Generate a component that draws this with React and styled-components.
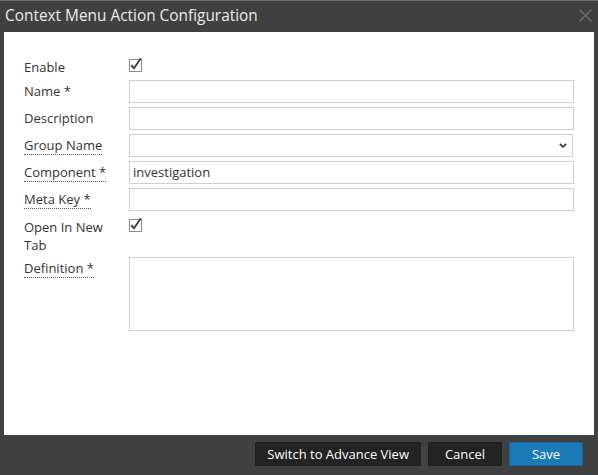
import React from "react";
import styled, { createGlobalStyle } from "styled-components";

const Global = createGlobalStyle`
  html, body { margin: 0; padding: 0; background: #404040; }
  body { font-family: "Open Sans", "Liberation Sans", sans-serif; }
  * { box-sizing: border-box; }
`;

const Dialog = styled.div`
  width: 598px;
  height: 475px;
  background: #404040;
  border-top: 1px solid #6e6e6e;
  display: flex;
  flex-direction: column;
`;

const TitleBar = styled.div`
  height: 31px;
  display: flex;
  align-items: flex-start;
  justify-content: space-between;
  padding: 4px 6px 0 5px;
`;

const Title = styled.div`
  font-size: 15.4px;
  line-height: 22px;
  color: #ececec;
`;

const Close = styled.button`
  border: 0;
  background: transparent;
  padding: 0;
  margin-top: 4px;
  width: 13px;
  height: 13px;
  display: block;
  cursor: pointer;
`;

const Body = styled.div`
  margin: 0 4px;
  height: 403px;
  background: #fff;
  padding: 23px 20px 0 20px;
  display: flex;
  flex-direction: column;
  gap: 4px;
`;

const Row = styled.div`
  display: grid;
  grid-template-columns: 95px 1fr;
  column-gap: 10px;
  align-items: start;
  padding-top: ${(p) => (p.$check ? "3px" : "0")};
  margin-top: ${(p) => (p.$pull ? "-1px" : "0")};
`;

const Label = styled.div`
  font-size: 13px;
  line-height: 18px;
  color: #333;
  padding-top: ${(p) => (p.$check ? "0" : "2px")};
`;

const Dotted = styled.span`
  border-bottom: 1px dotted #555;
`;

const Input = styled.div`
  height: 23px;
  border: 1px solid #cfcfcf;
  background: #fff;
  font-size: 13px;
  line-height: 21px;
  color: #333;
  padding: 0 3px;
`;

const Select = styled(Input)`
  margin-right: 1px;
  display: flex;
  align-items: center;
  justify-content: flex-end;
  padding-right: 5px;
`;

const Area = styled.div`
  height: 74px;
  border: 1px solid #cfcfcf;
`;

const Check = styled.svg`
  display: block;
  margin-top: 1px;
  overflow: visible;
`;

const Footer = styled.div`
  flex: 1;
  display: flex;
  justify-content: flex-end;
  align-items: flex-start;
  padding: 7px 15px 0 0;
  gap: 7px;
`;

const Button = styled.button`
  height: 24px;
  min-width: 74px;
  padding: 0 11px;
  border: 1px solid ${(p) => (p.$primary ? "#1565a0" : "#1e1e1e")};
  background: ${(p) => (p.$primary ? "#1b7bb7" : "#232323")};
  color: #fff;
  font-family: "Open Sans", "Liberation Sans", sans-serif;
  font-size: 13px;
  line-height: 20px;
  border-radius: 1px;
  cursor: pointer;
`;

const CheckBox = () => (
  <Check width="13" height="13" viewBox="0 0 13 13">
    <rect x="0.5" y="0.5" width="12" height="12" fill="#fff" stroke="#8c8c8c" />
    <path d="M2.2 6.2 L5 9.2 L11.8 -0.8" fill="none" stroke="#444" strokeWidth="2" />
  </Check>
);

const fields = [
  { label: "Enable", type: "check" },
  { label: "Name *", type: "input" },
  { label: "Description", type: "input" },
  { label: "Group Name", type: "select", dotted: true },
  { label: "Component *", type: "input", dotted: true, value: "investigation" },
  { label: "Meta Key *", type: "input", dotted: true },
  { label: "Open In New Tab", type: "check" },
  { label: "Definition *", type: "area", dotted: true, pull: true },
];

export default function App() {
  return (
    <>
      <Global />
      <Dialog>
        <TitleBar>
          <Title>Context Menu Action Configuration</Title>
          <Close aria-label="close">
            <svg width="13" height="13" viewBox="0 0 13 13">
              <path d="M0.5 0.5 L12.5 12.5 M12.5 0.5 L0.5 12.5" stroke="#5e6670" strokeWidth="1.6" />
            </svg>
          </Close>
        </TitleBar>
        <Body>
          {fields.map((f) => {
            const isCheck = f.type === "check";
            return (
              <Row key={f.label} $check={isCheck} $pull={f.pull}>
                <Label $check={isCheck}>
                  {f.dotted ? <Dotted>{f.label}</Dotted> : f.label}
                </Label>
                {isCheck && <CheckBox />}
                {f.type === "input" && <Input>{f.value || ""}</Input>}
                {f.type === "select" && (
                  <Select>
                    <svg width="8" height="5" viewBox="0 0 8 5">
                      <path d="M0.8 0.8 L4 3.8 L7.2 0.8" fill="none" stroke="#333" strokeWidth="1.6" />
                    </svg>
                  </Select>
                )}
                {f.type === "area" && <Area />}
              </Row>
            );
          })}
        </Body>
        <Footer>
          <Button>Switch to Advance View</Button>
          <Button>Cancel</Button>
          <Button $primary>Save</Button>
        </Footer>
      </Dialog>
    </>
  );
}
